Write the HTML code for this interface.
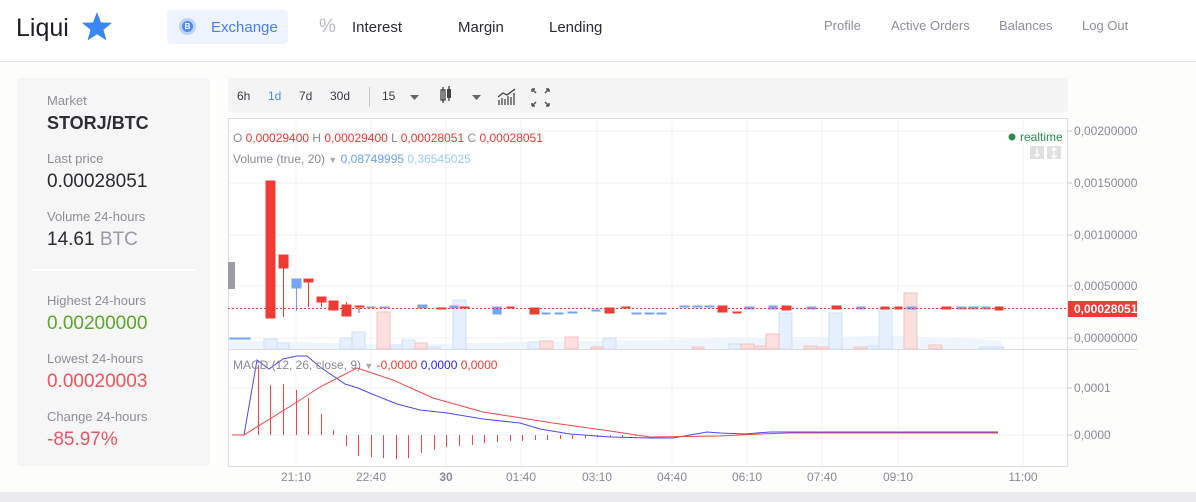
<!DOCTYPE html>
<html><head><meta charset="utf-8"><style>
*{margin:0;padding:0;box-sizing:border-box}
body{width:1196px;height:502px;overflow:hidden;background:#fdfdfc;font-family:"Liberation Sans",sans-serif;position:relative}
.a{position:absolute;white-space:nowrap}
.hdr{position:absolute;left:0;top:0;width:1196px;height:62px;background:#fff;border-bottom:1px solid #e6e6ea}
.nav{font-size:15px;color:#2b2b33;top:19px}
.rn{font-size:13px;color:#8e8e9c;top:18px}
.sb{position:absolute;left:17px;top:78px;width:193px;height:388px;background:#f6f6f7;border-radius:4px}
.lb{font-size:13px;color:#8e8e98;left:47px}
.vl{font-size:19px;color:#2a2a30;left:47px}
.tb{position:absolute;left:228px;top:78px;width:840px;height:35px;background:#f4f4f5;border-radius:5px}
.tt{font-size:12px;color:#3a3a44;top:89px}
</style></head><body>
<div class="hdr"></div>
<div class="a" style="left:16px;top:14px;font-size:25px;color:#1e1e24;font-weight:500">Liqui</div>
<svg class="a" style="left:81px;top:11px" width="32" height="31" viewBox="0 0 32 31"><polygon points="16,1 20,11.5 31,11.8 22.5,18.7 25.5,29.5 16,23.2 6.5,29.5 9.5,18.7 1,11.8 12,11.5" fill="#3a86f5"/></svg>
<div class="a" style="left:167px;top:10px;width:121px;height:34px;background:#eef4fe;border-radius:4px"></div>
<div class="a" style="left:179px;top:18px;width:17px;height:17px;border-radius:50%;background:#bcd4fb"></div>
<div class="a" style="left:182px;top:21px;width:11px;height:11px;border-radius:50%;background:#4f8cf2;color:#fff;font-size:8px;font-weight:bold;text-align:center;line-height:11px">B</div>
<div class="a nav" style="left:211px;color:#4a7df0">Exchange</div>
<div class="a" style="left:319px;top:16px;font-size:19px;color:#b9b9c2">%</div>
<div class="a nav" style="left:352px">Interest</div>
<div class="a nav" style="left:458px">Margin</div>
<div class="a nav" style="left:549px">Lending</div>
<div class="a rn" style="left:824px">Profile</div>
<div class="a rn" style="left:891px">Active Orders</div>
<div class="a rn" style="left:999px">Balances</div>
<div class="a rn" style="left:1082px">Log Out</div>

<div class="sb"></div>
<div class="a lb" style="top:93px">Market</div>
<div class="a vl" style="top:113px;font-size:18px;font-weight:bold;color:#2e2e34">STORJ/BTC</div>
<div class="a lb" style="top:151px">Last price</div>
<div class="a vl" style="top:171px">0.00028051</div>
<div class="a lb" style="top:209px">Volume 24-hours</div>
<div class="a vl" style="top:229px">14.61 <span style="color:#9a9aa6">BTC</span></div>
<div class="a" style="left:32px;top:269px;width:163px;height:2px;background:#fff"></div>
<div class="a lb" style="top:293px">Highest 24-hours</div>
<div class="a vl" style="top:313px;color:#5ca52a">0.00200000</div>
<div class="a lb" style="top:351px">Lowest 24-hours</div>
<div class="a vl" style="top:371px;color:#ea5560">0.00020003</div>
<div class="a lb" style="top:409px">Change 24-hours</div>
<div class="a vl" style="top:429px;color:#ea5560">-85.97%</div>

<div class="tb"></div>
<div class="a tt" style="left:237px">6h</div>
<div class="a tt" style="left:268px;color:#4a8af0">1d</div>
<div class="a tt" style="left:299px">7d</div>
<div class="a tt" style="left:330px">30d</div>
<div class="a" style="left:369px;top:87px;width:1px;height:20px;background:#c8c8d0"></div>
<div class="a tt" style="left:382px">15</div>
<svg class="a" style="left:226px;top:78px" width="340" height="35">
<polygon points="184,17 193,17 188.5,22" fill="#666"/>
<polygon points="246,17 255,17 250.5,22" fill="#666"/>
<rect x="215" y="12" width="4" height="10" fill="none" stroke="#444" stroke-width="1.3"/><line x1="217" y1="9" x2="217" y2="25" stroke="#444" stroke-width="1.3"/>
<rect x="221" y="11" width="4" height="9" fill="#444"/><line x1="223" y1="8" x2="223" y2="23" stroke="#444" stroke-width="1.3"/>
<g stroke="#444" stroke-width="1.3"><line x1="273" y1="27" x2="273" y2="22"/><line x1="276" y1="27" x2="276" y2="20"/><line x1="279" y1="27" x2="279" y2="21"/><line x1="282" y1="27" x2="282" y2="18"/><line x1="285" y1="27" x2="285" y2="19"/><line x1="288" y1="27" x2="288" y2="15"/></g>
<polyline points="272,19 277,15 281,17 289,11" fill="none" stroke="#444" stroke-width="1.3"/>
<g stroke="#555" stroke-width="1.5" fill="none"><path d="M306,11 l4,4 M306,11 h3 M306,11 v3"/><path d="M323,11 l-4,4 M323,11 h-3 M323,11 v3"/><path d="M306,28 l4,-4 M306,28 h3 M306,28 v-3"/><path d="M323,28 l-4,-4 M323,28 h-3 M323,28 v-3"/></g>
</svg>

<svg class="a" style="left:0;top:0" width="1196" height="502" font-family="Liberation Sans, sans-serif">
<rect x="0" y="492" width="1196" height="10" fill="#ebebef"/>
<rect x="228" y="118" width="840" height="348" fill="#fff"/>
<g stroke="#f0f0f3" stroke-width="1">
<line x1="228" y1="131" x2="1068" y2="131"/><line x1="228" y1="183" x2="1068" y2="183"/><line x1="228" y1="235" x2="1068" y2="235"/><line x1="228" y1="286" x2="1068" y2="286"/><line x1="228" y1="338" x2="1068" y2="338"/>
<line x1="228" y1="388" x2="1068" y2="388"/><line x1="228" y1="435" x2="1068" y2="435"/>
<line x1="296" y1="118" x2="296" y2="466"/><line x1="371" y1="118" x2="371" y2="466"/><line x1="446" y1="118" x2="446" y2="466"/><line x1="521" y1="118" x2="521" y2="466"/><line x1="597" y1="118" x2="597" y2="466"/><line x1="672" y1="118" x2="672" y2="466"/><line x1="747" y1="118" x2="747" y2="466"/><line x1="822" y1="118" x2="822" y2="466"/><line x1="898" y1="118" x2="898" y2="466"/><line x1="1023" y1="118" x2="1023" y2="466"/>
</g>
<g stroke="#dcdce4" stroke-width="1" fill="none"><path d="M228.5,118 V466.5 H1067.5 V118"/><line x1="228" y1="349.5" x2="1137" y2="349.5"/><line x1="228" y1="118.5" x2="1067" y2="118.5"/></g>
<rect x="228" y="262" width="7" height="27" fill="#9c9ca6"/>
<path d="M228,349 L228,340 L400,345 L470,343 L600,341 L700,339 L800,337 L900,336 L1000,340 L1004,349 Z" fill="#eaf3fe" opacity="0.8"/>
<g stroke-width="1">
<g fill="#e6f0fd" stroke="#cfe0fa">
<rect x="264" y="339" width="13" height="10"/><rect x="277" y="343" width="12" height="6"/><rect x="340" y="338" width="12" height="11"/><rect x="352" y="332" width="13" height="17"/><rect x="390" y="345" width="12" height="4"/><rect x="402" y="340" width="13" height="9"/><rect x="427" y="347" width="13" height="2"/><rect x="453" y="300" width="13" height="49"/><rect x="528" y="342" width="12" height="7"/><rect x="603" y="338" width="13" height="11"/><rect x="729" y="344" width="12" height="5"/><rect x="779" y="313" width="13" height="36"/><rect x="829" y="313" width="13" height="36"/><rect x="867" y="346" width="12" height="3"/><rect x="879" y="309" width="13" height="40"/><rect x="979" y="347" width="13" height="2"/><rect x="992" y="347" width="12" height="2"/>
</g>
<g fill="#fbe0df" stroke="#f3c2c0">
<rect x="377" y="312" width="13" height="37"/><rect x="415" y="343" width="12" height="6"/><rect x="540" y="341" width="13" height="8"/><rect x="565" y="337" width="13" height="12"/><rect x="591" y="347" width="12" height="2"/><rect x="741" y="344" width="13" height="5"/><rect x="754" y="346" width="12" height="3"/><rect x="766" y="334" width="13" height="15"/><rect x="804" y="346" width="13" height="3"/><rect x="817" y="347" width="12" height="2"/><rect x="854" y="347" width="13" height="2"/><rect x="904" y="293" width="13" height="56"/><rect x="929" y="345" width="13" height="4"/><rect x="692" y="347" width="12" height="2"/>
</g></g>
<g fill="#ee3c34" stroke="#ee3c34">
<rect x="266" y="181" width="9" height="137"/>
<line x1="283.5" y1="262" x2="283.5" y2="317"/><rect x="279" y="255" width="9" height="13"/>
<line x1="308.5" y1="280" x2="308.5" y2="307"/><rect x="304" y="279" width="9" height="3"/>
<line x1="321.5" y1="297" x2="321.5" y2="307"/><rect x="317" y="297" width="9" height="5"/>
<rect x="329" y="301" width="9" height="9"/>
<line x1="346.5" y1="302" x2="346.5" y2="316"/><rect x="342" y="305" width="9" height="11"/>
<line x1="359" y1="307" x2="359" y2="313"/><rect x="355" y="306" width="9" height="1"/>
<rect x="530" y="308" width="9" height="6"/><rect x="605" y="308" width="9" height="5"/><rect x="718" y="306" width="9" height="6"/><rect x="733" y="312" width="8" height="1"/><rect x="782" y="306" width="9" height="4"/><rect x="832" y="306" width="9" height="3"/><rect x="881" y="307" width="8" height="2"/><rect x="942" y="307" width="9" height="2"/><rect x="995" y="307" width="8" height="3"/>
<rect x="437" y="308" width="9" height="1"/><rect x="460" y="307" width="9" height="1"/><rect x="622" y="307" width="8" height="1"/><rect x="895" y="307" width="7" height="2"/><rect x="507" y="307" width="7" height="1"/>
</g>
<g fill="#72a6f3" stroke="#72a6f3">
<line x1="296.5" y1="285" x2="296.5" y2="311"/><rect x="292" y="279" width="9" height="9"/>
<rect x="367" y="307" width="8" height="1"/><rect x="380" y="307" width="9" height="1"/><rect x="418" y="305" width="9" height="3"/><rect x="493" y="307" width="8" height="7"/><rect x="450" y="306" width="8" height="2"/>
<rect x="542" y="313" width="8" height="1"/><rect x="555" y="313" width="8" height="1"/><rect x="568" y="312" width="9" height="1"/><rect x="592" y="310" width="8" height="1"/><rect x="632" y="313" width="9" height="1"/><rect x="645" y="313" width="9" height="1"/><rect x="657" y="313" width="9" height="1"/><rect x="680" y="306" width="9" height="1"/><rect x="693" y="306" width="9" height="1"/><rect x="705" y="306" width="9" height="1"/>
<rect x="745" y="307" width="9" height="2"/><rect x="769" y="306" width="8" height="3"/><rect x="807" y="307" width="9" height="2"/><rect x="857" y="307" width="8" height="2"/><rect x="907" y="307" width="9" height="2"/><rect x="957" y="307" width="9" height="2"/><rect x="969" y="307" width="9" height="2"/><rect x="982" y="307" width="8" height="2"/>
<rect x="230" y="338" width="20" height="1"/>
</g>
<line x1="228" y1="308.5" x2="1068" y2="308.5" stroke="#ee3c34" stroke-width="1" stroke-dasharray="2,2"/>
<g stroke="#f0484a" stroke-width="1">
<line x1="258.5" y1="435" x2="258.5" y2="365"/><line x1="270.5" y1="435" x2="270.5" y2="385"/><line x1="283.5" y1="435" x2="283.5" y2="384"/><line x1="296.5" y1="435" x2="296.5" y2="390"/><line x1="308.5" y1="435" x2="308.5" y2="398"/><line x1="321.5" y1="435" x2="321.5" y2="414"/><line x1="333.5" y1="435" x2="333.5" y2="430"/>
<line x1="346.5" y1="435" x2="346.5" y2="446"/><line x1="358.5" y1="435" x2="358.5" y2="456"/><line x1="371.5" y1="435" x2="371.5" y2="457"/><line x1="383.5" y1="435" x2="383.5" y2="458"/><line x1="396.5" y1="435" x2="396.5" y2="459"/><line x1="408.5" y1="435" x2="408.5" y2="458"/><line x1="421.5" y1="435" x2="421.5" y2="453"/><line x1="434.5" y1="435" x2="434.5" y2="450"/><line x1="446.5" y1="435" x2="446.5" y2="447"/><line x1="459.5" y1="435" x2="459.5" y2="446"/><line x1="472.5" y1="435" x2="472.5" y2="445"/><line x1="484.5" y1="435" x2="484.5" y2="443"/><line x1="497.5" y1="435" x2="497.5" y2="442"/><line x1="510.5" y1="435" x2="510.5" y2="441"/><line x1="522.5" y1="435" x2="522.5" y2="441"/><line x1="535.5" y1="435" x2="535.5" y2="440"/><line x1="547.5" y1="435" x2="547.5" y2="440"/><line x1="560.5" y1="435" x2="560.5" y2="439"/><line x1="572.5" y1="435" x2="572.5" y2="439"/><line x1="585.5" y1="435" x2="585.5" y2="438"/><line x1="597.5" y1="435" x2="597.5" y2="437"/><line x1="610.5" y1="435" x2="610.5" y2="437"/><line x1="622.5" y1="435" x2="622.5" y2="437"/><line x1="635.5" y1="435" x2="635.5" y2="436"/>
</g>
<polyline fill="none" stroke="#4b4bf0" stroke-width="1" points="232,435 244,435 257,360 269,369 283,359 297,356 307,356 320,367 345,384 358,388 372,394 397,404 420,410 447,413 483,419 520,423 540,429 570,434 610,437 650,438 673,438 707,432 720,433 745,434 770,432 790,432 998,432"/>
<polyline fill="none" stroke="#f0484a" stroke-width="1" points="232,435 244,435 297,402 320,387 357,368 393,380 433,398 483,412 553,423 610,431 650,437 720,436 760,434 790,433 998,433"/>
<g font-size="12">
<text x="233" y="142" fill="#8a8a94">O <tspan fill="#ee3c34">0,00029400</tspan> H <tspan fill="#ee3c34">0,00029400</tspan> L <tspan fill="#ee3c34">0,00028051</tspan> C <tspan fill="#ee3c34">0,00028051</tspan></text>
<text x="233" y="163" fill="#8a8a94">Volume (true, 20) <tspan fill="#aaa" font-size="9">▼</tspan>  <tspan fill="#6aa2f2">0,08749995</tspan> <tspan fill="#9ccbf6">0,36545025</tspan></text>
<text x="233" y="369" fill="#8a8a94">MACD (12, 26, close, 9) <tspan fill="#aaa" font-size="9">▼</tspan>  <tspan fill="#ee3c34">-0,0000</tspan> <tspan fill="#2a2af0">0,0000</tspan> <tspan fill="#ee3c34">0,0000</tspan></text>
<text x="1020" y="141" fill="#2c8a50">realtime</text>
</g>
<circle cx="1012" cy="137" r="3.5" fill="#2c8a50"/>
<rect x="1030" y="146" width="14" height="13" fill="#e0e0e3"/><rect x="1047" y="146" width="14" height="13" fill="#e0e0e3"/>
<path d="M1037,148 v8 M1034.5,154 l2.5,2.5 l2.5,-2.5 M1054,148 v10 M1051.5,150.5 l2.5,-2.5 l2.5,2.5 M1051.5,155.5 l2.5,2.5 l2.5,-2.5" stroke="#fff" stroke-width="1.3" fill="none"/>
<g stroke="#c8c8d0"><line x1="1068" y1="131" x2="1072" y2="131"/><line x1="1068" y1="183" x2="1072" y2="183"/><line x1="1068" y1="235" x2="1072" y2="235"/><line x1="1068" y1="286" x2="1072" y2="286"/><line x1="1068" y1="338" x2="1072" y2="338"/><line x1="1068" y1="388" x2="1072" y2="388"/><line x1="1068" y1="435" x2="1072" y2="435"/></g>
<g font-size="12" fill="#8a8a96">
<text x="1074" y="135">0,00200000</text><text x="1074" y="187">0,00150000</text><text x="1074" y="239">0,00100000</text><text x="1074" y="290">0,00050000</text><text x="1074" y="342">0,00000000</text><text x="1074" y="392">0,0001</text><text x="1074" y="439">0,0000</text>
</g>
<rect x="1068" y="301" width="69" height="16" fill="#ee3c34"/>
<text x="1074" y="313" font-size="12" fill="#fff" font-weight="bold">0,00028051</text>
<g font-size="12" fill="#8a8a96" text-anchor="middle">
<text x="296" y="481">21:10</text><text x="371" y="481">22:40</text><text x="446" y="481" font-weight="bold">30</text><text x="521" y="481">01:40</text><text x="597" y="481">03:10</text><text x="672" y="481">04:40</text><text x="747" y="481">06:10</text><text x="822" y="481">07:40</text><text x="898" y="481">09:10</text><text x="1023" y="481">11:00</text>
</g>
</svg>
</body></html>
